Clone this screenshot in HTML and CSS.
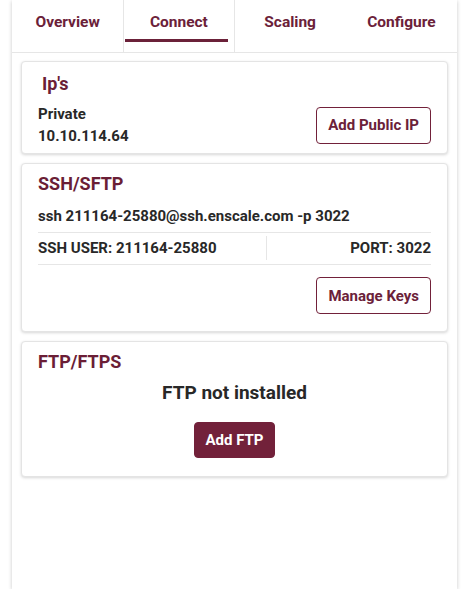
FILE: index.html
```html
<!DOCTYPE html>
<html lang="en">
<head>
<meta charset="utf-8">
<title>Connect</title>
<link rel="stylesheet" href="styles.css">
</head>
<body>
<div class="panel">
  <nav class="tabs">
    <div class="tab">Overview</div>
    <div class="tab tab-active">Connect</div>
    <div class="tab">Scaling</div>
    <div class="tab">Configure</div>
  </nav>
  <div class="content">
    <section class="card card-ips">
      <h2 class="card-title title-ips">Ip's</h2>
      <div class="ip-row">
        <div class="ip-info">
          <div class="line">Private</div>
          <div class="line">10.10.114.64</div>
        </div>
        <button class="btn btn-outline">Add Public IP</button>
      </div>
    </section>
    <section class="card card-ssh">
      <h2 class="card-title">SSH/SFTP</h2>
      <div class="ssh-cmd">ssh 211164-25880@ssh.enscale.com -p 3022</div>
      <div class="ssh-grid">
        <div class="ssh-user">SSH USER: 211164-25880</div>
        <div class="ssh-port">PORT: 3022</div>
      </div>
      <div class="actions">
        <button class="btn btn-outline">Manage Keys</button>
      </div>
    </section>
    <section class="card card-ftp">
      <h2 class="card-title">FTP/FTPS</h2>
      <div class="ftp-status">FTP not installed</div>
      <div class="center">
        <button class="btn btn-filled">Add FTP</button>
      </div>
    </section>
  </div>
</div>
</body>
</html>
```

FILE: styles.css
```css
* { box-sizing: border-box; }
html, body { margin: 0; padding: 0; background: #ffffff; }
body {
  font-family: Roboto, "Liberation Sans", sans-serif;
  color: #282828;
}
.panel {
  margin-left: 12px;
  width: 445px;
  height: 589px;
  background: #fff;
  box-shadow: 0 1px 4px rgba(0, 0, 0, 0.22);
}
.tabs {
  display: grid;
  grid-template-columns: repeat(4, 1fr);
  height: 53px;
  border-bottom: 1px solid #e6e6e6;
}
.tab {
  padding-top: 12px;
  text-align: center;
  font-size: 15.5px;
  line-height: 20px;
  font-weight: 700;
  color: #6b2139;
}
.tab-active {
  border-left: 1px solid #e6e6e6;
  border-right: 1px solid #e6e6e6;
}
.tab-active::after {
  content: "";
  display: block;
  height: 3px;
  margin: 7px 6px 0 1px;
  background: #6b2139;
}
.content {
  padding: 8px 9px 0 9px;
  display: flex;
  flex-direction: column;
  gap: 9px;
}
.card {
  border: 1px solid #e4e4e4;
  border-radius: 4px;
  box-shadow: 0 1px 3px rgba(0, 0, 0, 0.16);
  padding: 0 16px;
  background: #fff;
}
.card-title {
  margin: 0;
  font-size: 18px;
  line-height: 22px;
  font-weight: 700;
  color: #6b1e36;
}
.title-ips { margin-left: 4px; }
.card-ips { padding-top: 11px; padding-bottom: 6px; }
.ip-row {
  display: flex;
  align-items: center;
  justify-content: space-between;
  margin-top: 8px;
}
.line {
  font-size: 15px;
  line-height: 22px;
  font-weight: 700;
}
.btn {
  font-family: inherit;
  font-size: 15px;
  font-weight: 700;
  height: 37px;
  padding: 0 11px;
  border-radius: 4px;
  cursor: pointer;
}
.btn-outline {
  background: #fff;
  border: 1px solid #72213a;
  color: #6b2139;
}
.btn-filled {
  background: #72213a;
  border: 1px solid #72213a;
  color: #fff;
  height: 36px;
  padding: 0 10px;
}
.card-ssh { padding-top: 9px; padding-bottom: 17px; }
.ssh-cmd {
  margin-top: 11px;
  font-size: 15px;
  line-height: 20px;
  font-weight: 700;
  padding-bottom: 6px;
  border-bottom: 1px solid #e6e6e6;
}
.ssh-grid {
  display: grid;
  grid-template-columns: 7fr 5fr;
  border-bottom: 1px solid #e6e6e6;
  font-size: 15px;
  line-height: 20px;
  font-weight: 700;
}
.ssh-user { border-right: 1px solid #e6e6e6; margin: 3px 0 4px; padding: 2px 0; }
.ssh-port { text-align: right; padding: 5px 0; }
.actions {
  display: flex;
  justify-content: flex-end;
  margin-top: 12px;
}
.card-ftp { padding-top: 9px; padding-bottom: 18px; }
.ftp-status {
  margin-top: 8px;
  text-align: center;
  font-size: 19px;
  line-height: 24px;
  font-weight: 700;
}
.center {
  display: flex;
  justify-content: center;
  margin-top: 17px;
}
```
